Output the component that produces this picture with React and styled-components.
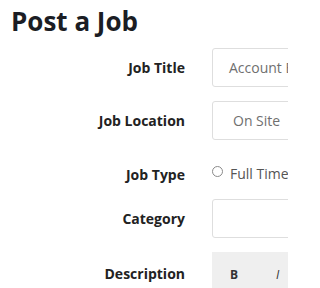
import styled, { createGlobalStyle } from "styled-components";

const Global = createGlobalStyle`
  html, body {
    margin: 0;
    padding: 0;
    background: #fff;
    overflow: hidden;
  }
  body {
    font-family: "Open Sans", "Liberation Sans", sans-serif;
  }
`;

const Page = styled.div`
  width: 288px;
  height: 288px;
  overflow: hidden;
  padding-left: 11px;
  box-sizing: border-box;
`;

const Title = styled.h1`
  margin: 0;
  padding-top: 3px;
  font-size: 26px;
  line-height: 36px;
  font-weight: 700;
  color: #1b1d24;
  white-space: nowrap;
`;

const Form = styled.div`
  margin-top: 9px;
  display: grid;
  grid-template-columns: 174px 320px;
  column-gap: 27px;
  row-gap: 14px;
`;

const Label = styled.div`
  text-align: right;
  font-size: 14px;
  line-height: 20px;
  font-weight: 700;
  color: #222;
  padding-top: ${(p) => p.$top || 10}px;
  white-space: nowrap;
`;

const Field = styled.div`
  height: 39px;
  box-sizing: border-box;
  border: 1px solid #dedede;
  border-radius: 3px;
  display: flex;
  align-items: center;
  padding-left: ${(p) => p.$pad || 16}px;
  font-size: 14px;
  color: #6f6f6f;
  white-space: nowrap;
  overflow: hidden;
`;

const Options = styled.div`
  height: 30px;
  display: flex;
  align-items: flex-start;
  padding-top: 10px;
  box-sizing: border-box;
  gap: 7px;
  font-size: 14px;
  line-height: 20px;
  color: #555;
`;

const Radio = styled.span`
  width: 11px;
  height: 11px;
  margin-top: 2px;
  border: 1px solid #8a8a8a;
  border-radius: 50%;
  box-sizing: border-box;
  flex-shrink: 0;
`;

const Toolbar = styled.div`
  height: 60px;
  background: #efefef;
  display: flex;
  align-items: flex-start;
  padding: 14px 0 0 18px;
  box-sizing: border-box;
  gap: 38px;
  font-size: 12px;
  color: #333;
`;

const Tool = styled.span`
  font-weight: ${(p) => (p.$bold ? 700 : 400)};
  font-style: ${(p) => (p.$italic ? "italic" : "normal")};
`;

export default function App() {
  return (
    <Page>
      <Global />
      <Title>Post a Job</Title>
      <Form>
        <Label>Job Title</Label>
        <Field>Account Executive</Field>

        <Label>Job Location</Label>
        <Field $pad={20}>On Site</Field>

        <Label $top={11}>Job Type</Label>
        <Options>
          <Radio />
          <span>Full Time</span>
        </Options>

        <Label>Category</Label>
        <Field />

        <Label $top={12}>Description</Label>
        <Toolbar>
          <Tool $bold>B</Tool>
          <Tool $italic>I</Tool>
        </Toolbar>
      </Form>
    </Page>
  );
}
